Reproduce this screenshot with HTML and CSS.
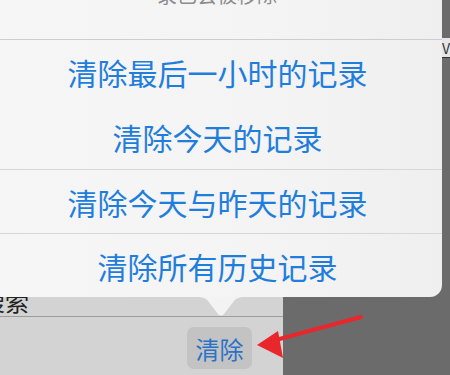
FILE: index.html
```html
<!DOCTYPE html>
<html lang="zh-CN">
<head>
  <meta charset="UTF-8">
  <title>清除历史记录</title>
  <link rel="stylesheet" href="styles.css">
</head>
<body>

  <!-- 左侧面板 -->
  <div class="sidebar">
    <div class="search-row">
      <span class="search-label">搜索</span>
    </div>
    <div class="toolbar">
      <button class="clear-btn">清除</button>
    </div>
  </div>

  <!-- 右上角残留 -->
  <div class="edge-tab">V</div>

  <!-- 弹出菜单 -->
  <div class="popover">
    <div class="popover-head">
      <span>录已会被移除</span>
    </div>
    <div class="option first">清除最后一小时的记录</div>
    <div class="option second">清除今天的记录</div>
    <div class="option">清除今天与昨天的记录</div>
    <div class="option">清除所有历史记录</div>
    <svg class="popover-tip" width="48" height="20" viewBox="0 0 48 20">
      <path d="M0 0 C8 0 10 2 14 8 L21 17 Q24 20 27 17 L34 8 C38 2 40 0 48 0 Z" fill="#f3f3f3"/>
    </svg>
  </div>

  <!-- 红色箭头 -->
  <svg class="red-arrow" width="450" height="375" viewBox="0 0 450 375">
    <line x1="361" y1="317" x2="272" y2="341" stroke="#e8262b" stroke-width="4" stroke-linecap="round"/>
    <polygon points="257,345 278,331 283,358" fill="#e8262b"/>
  </svg>

</body>
</html>
```

FILE: styles.css
```css
* {
  margin: 0;
  padding: 0;
  box-sizing: border-box;
}

body {
  width: 450px;
  height: 375px;
  overflow: hidden;
  position: relative;
  background: #6b6b6b;
  font-family: "Noto Sans CJK SC", "Noto Sans", sans-serif;
}

.sidebar {
  width: 283px;
  height: 375px;
  background: #d3d3d3;
  display: flex;
  flex-direction: column;
}

.search-row {
  height: 317px;
  border-bottom: 1px solid #9d9d9d;
  display: flex;
  align-items: flex-end;
  padding-bottom: 2px;
}

.search-label {
  font-size: 24px;
  line-height: 26px;
  color: #222;
  margin-left: -19px;
}

.toolbar {
  display: flex;
  justify-content: flex-end;
  padding: 10px 31px 0 0;
}

.clear-btn {
  width: 65px;
  height: 42px;
  background: #c3c3c3;
  border: none;
  border-radius: 7px;
  font-family: inherit;
  font-size: 24px;
  color: #2a72c8;
}

.edge-tab {
  position: absolute;
  top: 38px;
  left: 442px;
  width: 12px;
  height: 20px;
  background: #e6e6e6;
  border-bottom: 1px solid #333;
  font-size: 14px;
  line-height: 20px;
  color: #333;
}

.popover {
  position: absolute;
  top: 0;
  left: -12px;
  width: 454px;
  height: 297px;
  background: linear-gradient(90deg, #f6f6f6 0%, #f4f4f4 60%, #efefef 100%);
  border-radius: 0 0 12px 12px;
}

.popover-head {
  height: 40px;
  border-bottom: 1px solid #cdcdcd;
  text-align: center;
  overflow: hidden;
}

.popover-head span {
  display: block;
  margin-top: -17px;
  padding-left: 4px;
  font-size: 20px;
  line-height: 24px;
  color: #8c8c8c;
}

.option {
  height: 64px;
  border-top: 1px solid #d6d6d6;
  display: flex;
  align-items: center;
  justify-content: center;
  padding-left: 5px;
  font-size: 30px;
  color: #1f7edc;
}

.option.first {
  border-top: none;
}

.option.second {
  border-top: none;
  height: 65px;
}

.popover-tip {
  position: absolute;
  left: 209px;
  top: 297px;
}

.red-arrow {
  position: absolute;
  top: 0;
  left: 0;
}
```
